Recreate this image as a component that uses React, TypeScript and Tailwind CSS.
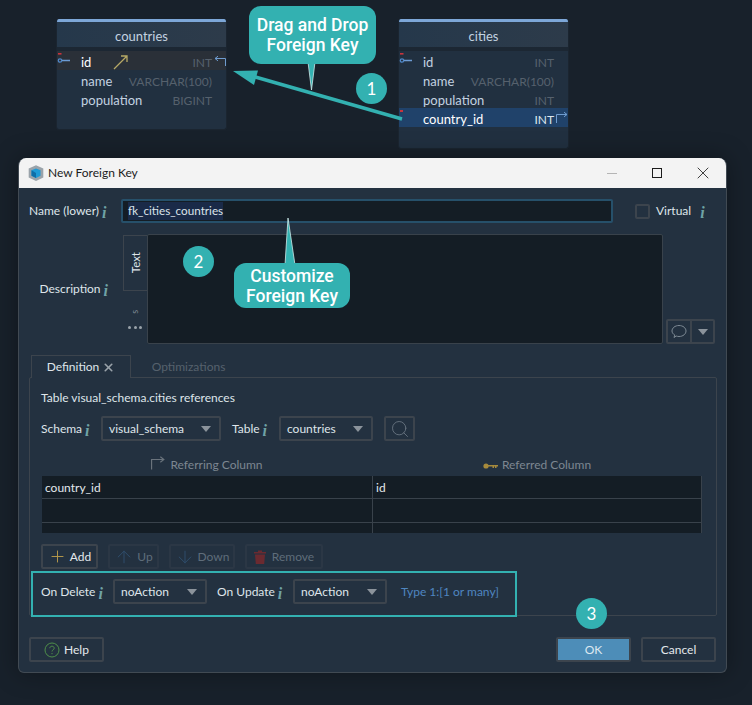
import type { ReactNode } from "react";
import { ArrowDown, ArrowUp, Plus, Search, X } from "lucide-react";

const UI_FONT = "font-['Lato','Noto_Sans',sans-serif]";

type Column = { name: string; type: string; key?: boolean; fk?: boolean };

const countryColumns: Column[] = [
    { name: "id", type: "INT", key: true },
    { name: "name", type: "VARCHAR(100)" },
    { name: "population", type: "BIGINT" }
];

const cityColumns: Column[] = [
    { name: "id", type: "INT", key: true },
    { name: "name", type: "VARCHAR(100)" },
    { name: "population", type: "INT" },
    { name: "country_id", type: "INT", fk: true }
];

function KeyMark() {
    return (
        <svg width="14" height="11" viewBox="0 0 14 11" className="absolute left-0 top-[2px]">
            <rect x="1" y="0" width="3.500" height="1.600" fill="#c8343c" />
            <circle cx="3" cy="7.500" r="1.700" fill="none" stroke="#4f86c6" strokeWidth="1.300" />
            <path d="M5 7.500h8" stroke="#6d9bd3" strokeWidth="1.300" />
        </svg>
    );
}

function TurnIcon({ flip, color = "#6f9ccf", className }: { flip?: boolean; color?: string; className?: string }) {
    return (
        <svg width="12" height="11" viewBox="0 0 12 11" fill="none" className={className}>
            <path
                d={flip ? "M.5 11V2.500H11M8 .2l3 2.300-3 2.300" : "M11.500 10V2.500H1M4 .2L1 2.500l3 2.300"}
                stroke={color}
                strokeWidth="1"
            />
        </svg>
    );
}

function DbTable({ title, columns, height }: { title: string; columns: Column[]; height: string }) {
    return (
        <div className={`w-full ${height} flex flex-col rounded-[3px] bg-[#213040] overflow-hidden border-x border-b border-[#1b2530]`}>
            <div className="h-[3px] shrink-0 bg-[#7da7d8]" />
            <div className="h-[25px] shrink-0 flex items-center justify-center pt-[4px] text-[13px] text-[#c3d2e0] bg-gradient-to-r from-[#25384b] to-[#2d3b4a]">
                {title}
            </div>
            <div className="h-[4px] shrink-0 bg-[#1c2733]" />
            <div className="flex flex-col">
                {columns.map((col) => (
                    <div
                        key={col.name}
                        className={`relative h-[19px] flex items-center justify-between pl-[24px] pr-[14px] pt-[5px] text-[13px] ${
                            col.fk ? "bg-[#20426a] text-white" : "text-[#c3d2e0]"
                        } ${col.key && title === "countries" ? "bg-[#2a3038] text-white" : ""}`}
                    >
                        {col.key && <KeyMark />}
                        {col.fk && <div className="absolute left-[1px] top-[2px] w-[3px] h-[2px] bg-[#c8343c]" />}
                        <span>{col.name}</span>
                        <span className={`text-[12px] ${col.fk ? "text-[#dde6ee]" : "text-[#56616d]"}`}>{col.type}</span>
                        {col.key && title === "countries" && (
                            <TurnIcon className="absolute right-0 top-[5px]" />
                        )}
                        {col.fk && <TurnIcon flip className="absolute right-0 top-[4px]" />}
                    </div>
                ))}
            </div>
        </div>
    );
}

function Info() {
    return (
        <span className="font-['Liberation_Serif',serif] italic font-bold text-[16px] leading-none text-[#6fa3a6] ml-[3px] translate-y-[2px]">
            i
        </span>
    );
}

function Caret() {
    return (
        <svg width="10" height="6" viewBox="0 0 10 6" className="shrink-0">
            <path d="M0 0h10L5 6z" fill="#8b939b" />
        </svg>
    );
}

function Dropdown({ value, width }: { value: string; width: string }) {
    return (
        <div className={`${width} h-[25px] shrink-0 flex items-center justify-between pl-[6px] pr-[8px] rounded-[2px] border-2 border-[#3c444d] text-[#dfe5ea]`}>
            <span>{value}</span>
            <Caret />
        </div>
    );
}

function ToolButton({ children, width, muted }: { children: ReactNode; width: string; muted?: boolean }) {
    return (
        <div
            className={`${width} h-[25px] flex items-center justify-center gap-[3px] rounded-[2px] border-2 ${
                muted ? "border-[#2b3745] text-[#5f6d7a]" : "border-[#3c444d] text-[#e3e8ec]"
            }`}
        >
            {children}
        </div>
    );
}

function Callout({ lines, className }: { lines: string[]; className: string }) {
    return (
        <div className={`absolute flex flex-col items-center justify-center rounded-[12px] bg-[#33b1b1] text-white font-['Roboto',sans-serif] font-medium text-[17.500px] leading-[20px] ${className}`}>
            {lines.map((line) => (
                <span key={line}>{line}</span>
            ))}
        </div>
    );
}

function Badge({ n, className }: { n: string; className: string }) {
    return (
        <div className={`absolute w-[31px] h-[31px] rounded-full bg-[#33b1b1] text-white flex items-center justify-center text-[17px] ${className}`}>
            {n}
        </div>
    );
}

export default function App() {
    return (
        <div className={`relative w-[752px] h-[705px] overflow-hidden bg-[#18212b] text-[12px] ${UI_FONT}`}>
            <div className="absolute left-[56px] top-[19px] w-[171px]">
                <DbTable title="countries" columns={countryColumns} height="h-[111px]" />
                <svg width="16" height="15" viewBox="0 0 16 15" className="absolute left-[57px] top-[36px]">
                    <path d="M1 14L14 1M8 1h6v6" fill="none" stroke="#b7a965" strokeWidth="1.300" />
                </svg>
            </div>
            <div className="absolute left-[398px] top-[19px] w-[171px]">
                <DbTable title="cities" columns={cityColumns} height="h-[130px]" />
            </div>

            {/* dialog */}
            <div className="absolute left-[18px] top-[158px] w-[709px] h-[515px] flex flex-col rounded-t-[8px] rounded-b-[6px] overflow-hidden border border-[#414a53] border-t-0 bg-[#233140] shadow-[0_0_24px_rgba(0,0,0,0.35)]">
                <div className="h-[30px] shrink-0 flex items-center bg-[#f3f3f3] pl-[8px] text-[#1c1c1c]">
                    <svg width="18" height="18" viewBox="0 0 16 16" className="mr-[3px]">
                        <path d="M8 1l6.500 3v8L8 15l-6.500-3V4z" fill="#9aa3aa" />
                        <path d="M4 5.500L8 4l4 1.500v5L8 12.500 4 10.500z" fill="#1d9ad6" />
                        <path d="M8 8v4.500L4 10.500v-5z" fill="#0d6ea8" />
                    </svg>
                    <span>New Foreign Key</span>
                    <div className="ml-auto flex items-center">
                        <div className="w-[10px] h-px bg-[#b5b5b5] mr-[35px]" />
                        <div className="w-[10px] h-[10px] border border-[#1c1c1c] mr-[31px]" />
                        <X size={20} strokeWidth={1} className="mr-[13px] text-[#1c1c1c]" />
                    </div>
                </div>

                <div className="flex items-center h-[24px] mt-[11px] pl-[10px]">
                    <div className="w-[92px] flex items-center text-[#dfe5ea]">
                        Name (lower)
                        <Info />
                    </div>
                    <div className="w-[492px] h-[24px] flex items-center pl-[5px] rounded-[2px] border-2 border-[#26506a] bg-[#141d25] text-[#dbe3ea]">
                        <span className="bg-[#1a2a48] text-[11.700px]">fk_cities_countries</span>
                    </div>
                    <div className="w-[15px] h-[15px] ml-[22px] rounded-[2px] border-2 border-[#3c444d]" />
                    <span className="ml-[6px] text-[#dfe5ea]">Virtual</span>
                    <span className="ml-[6px] flex">
                        <Info />
                    </span>
                </div>

                <div className="flex h-[110px] mt-[11px]">
                    <div className="w-[104px] shrink-0 flex items-center justify-end pr-[15px] text-[#dfe5ea]">
                        Description
                        <Info />
                    </div>
                    <div className="w-[24px] shrink-0 flex flex-col items-center">
                        <div className="w-[24px] h-[56px] mt-[1px] flex items-center justify-center border border-r-0 border-[#3c444d] text-[#dfe5ea] text-[11.500px]">
                            <span className="-rotate-90">Text</span>
                        </div>
                        <span className="mt-[14px] -rotate-90 text-[9px] text-[#7d8791]">s</span>
                        <div className="mt-[7px] flex gap-[2.500px]">
                            <div className="w-[3px] h-[3px] rounded-full bg-[#9aa3aa]" />
                            <div className="w-[3px] h-[3px] rounded-full bg-[#9aa3aa]" />
                            <div className="w-[3px] h-[3px] rounded-full bg-[#9aa3aa]" />
                        </div>
                    </div>
                    <div className="w-[516px] shrink-0 rounded-[2px] border border-[#39424b] bg-[#141d25]" />
                    <div className="self-end ml-[3px] w-[49px] h-[25px] flex rounded-[2px] border-2 border-[#3c444d]">
                        <div className="w-[24px] flex items-center justify-center border-r-2 border-[#3c444d]">
                            <svg width="16" height="15" viewBox="0 0 16 15" fill="none">
                                <path d="M3 13.500l.8-2.500C2 10 1 8.700 1 7c0-3 3-5.500 7-5.500S15 4 15 7s-3 5.500-7 5.500c-1 0-2-.2-2.800-.5z" stroke="#7e8a94" strokeWidth="1" />
                            </svg>
                        </div>
                        <div className="flex-1 flex items-center justify-center">
                            <Caret />
                        </div>
                    </div>
                </div>

                <div className="flex h-[23px] shrink-0 mt-[11px] ml-[12px] relative z-10 -mb-px">
                    <div className="w-[100px] flex items-center justify-center gap-[3px] border border-b-0 border-[#3c444d] bg-[#233140] text-[#dfe5ea]">
                        Definition
                        <X size={13} strokeWidth={3} className="text-[#9aa3aa]" />
                    </div>
                    <div className="w-[95px] flex items-center justify-center ml-[10px] text-[#56616d]">Optimizations</div>
                </div>

                <div className="w-[688px] h-[239px] ml-[10px] shrink-0 border border-[#3c444d] rounded-[2px]">
                    <div className="h-[14px] mt-[13px] ml-[11px] flex items-center text-[#dfe5ea]">
                        Table visual_schema.cities references
                    </div>
                    <div className="flex items-center h-[25px] mt-[11px] ml-[11px]">
                        <div className="w-[60px] flex items-center pt-[1px] text-[#dfe5ea]">
                            Schema
                            <Info />
                        </div>
                        <Dropdown value="visual_schema" width="w-[120px]" />
                        <div className="w-[58px] pl-[11px] pt-[1px] flex items-center text-[#dfe5ea]">
                            Table
                            <Info />
                        </div>
                        <Dropdown value="countries" width="w-[94px]" />
                        <div className="w-[31px] h-[25px] ml-[11px] flex items-center justify-center rounded-[2px] border-2 border-[#3c444d]">
                            <Search size={20} strokeWidth={1} className="text-[#6e7a85]" />
                        </div>
                    </div>
                    <div className="flex h-[24px] ml-[12px] w-[660px] mt-[11px] pb-[2px] text-[#7d8791]">
                        <div className="w-[330px] flex items-end justify-center gap-[5px]">
                            <TurnIcon flip color="#6a737c" className="w-[14px] h-[14px] mb-[4px]" />
                            Referring Column
                        </div>
                        <div className="flex-1 flex items-end justify-center gap-[4px]">
                            <svg width="15" height="8" viewBox="0 0 15 8" className="mb-[4px]">
                                <circle cx="3" cy="4" r="2.600" fill="#a68a3c" />
                                <path d="M5 3h10v1.500h-1.500V6H12V4.500h-1V6H9.500V4.500H5z" fill="#a68a3c" />
                            </svg>
                            Referred Column
                        </div>
                    </div>
                    <div className="ml-[12px] w-[660px] h-[57px] bg-[#141d25] grid grid-cols-[331px_1fr] grid-rows-[23px_24px_10px] border-r border-[#39424b] text-[#e3e8ec]">
                        <div className="pl-[3px] pt-[1px] flex items-center border-r border-b border-[#39424b]">country_id</div>
                        <div className="pl-[3px] pt-[1px] flex items-center border-b border-[#39424b]">id</div>
                        <div className="border-r border-b border-[#39424b]" />
                        <div className="border-b border-[#39424b]" />
                        <div className="border-r border-[#39424b]" />
                        <div />
                    </div>
                    <div className="flex h-[25px] mt-[11px] ml-[11px] gap-[10px]">
                        <ToolButton width="w-[57px]">
                            <Plus size={19} strokeWidth={1.200} className="text-[#b89a4a]" />
                            Add
                        </ToolButton>
                        <ToolButton width="w-[51px]" muted>
                            <ArrowUp size={20} strokeWidth={1.200} className="text-[#2e4d6b]" />
                            Up
                        </ToolButton>
                        <ToolButton width="w-[66px]" muted>
                            <ArrowDown size={20} strokeWidth={1.200} className="text-[#2e4d6b]" />
                            Down
                        </ToolButton>
                        <ToolButton width="w-[78px]" muted>
                            <svg width="12" height="14" viewBox="0 0 12 14" className="mr-[3px]">
                                <path d="M0 2h4V.5h4V2h4v1.500H0zM1 4.500h10L10.200 14H1.800z" fill="#6b2a30" />
                            </svg>
                            Remove
                        </ToolButton>
                    </div>
                    <div className="w-[486px] h-[46px] ml-px mt-[2px] flex items-start pt-[6px] pl-[8px] border-2 border-[#33b1b1]">
                        <div className="flex items-center h-[25px]">
                            <div className="w-[72px] flex items-center pt-[1px] text-[#dfe5ea]">
                                On Delete
                                <Info />
                            </div>
                            <Dropdown value="noAction" width="w-[94px]" />
                            <div className="w-[86px] pl-[10px] pt-[1px] flex items-center text-[#dfe5ea]">
                                On Update
                                <Info />
                            </div>
                            <Dropdown value="noAction" width="w-[94px]" />
                            <span className="ml-[14px] pt-[1px] text-[#4f86c0]">Type 1:[1 or many]</span>
                        </div>
                    </div>
                </div>

                <div className="flex items-center h-[25px] mt-[21px] px-[10px] text-[#e3e8ec]">
                    <div className="w-[75px] h-[25px] flex items-center justify-center gap-[4px] rounded-[2px] border-2 border-[#3c444d]">
                        <svg width="16" height="16" viewBox="0 0 16 16" fill="none">
                            <circle cx="8" cy="8" r="7" stroke="#4f8f4a" />
                            <path d="M5.800 6.200C5.800 5 6.800 4.200 8 4.200s2.200.8 2.200 2c0 1.600-2.200 1.600-2.200 3.300M8 11v1.200" stroke="#4f8f4a" />
                        </svg>
                        <span className="pt-[1px]">Help</span>
                    </div>
                    <div className="ml-auto w-[75px] h-[25px] flex items-center justify-center pt-[1px] rounded-[2px] border-2 border-[#3c444d] bg-[#4d8db8] text-[#dce8f0]">
                        OK
                    </div>
                    <div className="ml-[10px] w-[75px] h-[25px] flex items-center justify-center pt-[1px] rounded-[2px] border-2 border-[#3c444d]">
                        Cancel
                    </div>
                </div>
            </div>

            {/* annotations */}
            <svg width="752" height="705" viewBox="0 0 752 705" className="absolute left-0 top-0 pointer-events-none">
                <path d="M402 119L252 76" stroke="#33b1b1" strokeWidth="3.500" />
                <path d="M233 71l25-.5-4 14.500z" fill="#33b1b1" />
                <path d="M308 62l3.500 28 3.500-28z" fill="#33b1b1" stroke="#cfeaea" strokeWidth="0.800" />
                <path d="M285 265l3-47 7 47z" fill="#33b1b1" stroke="#cfeaea" strokeWidth="0.800" />
            </svg>
            <Callout lines={["Drag and Drop", "Foreign Key"]} className="left-[249px] top-[6px] w-[127px] h-[58px]" />
            <Callout lines={["Customize", "Foreign Key"]} className="left-[234px] top-[263px] w-[116px] h-[45px]" />
            <Badge n="1" className="left-[356px] top-[73px]" />
            <Badge n="2" className="left-[183px] top-[246px]" />
            <Badge n="3" className="left-[576px] top-[598px]" />
        </div>
    );
}
